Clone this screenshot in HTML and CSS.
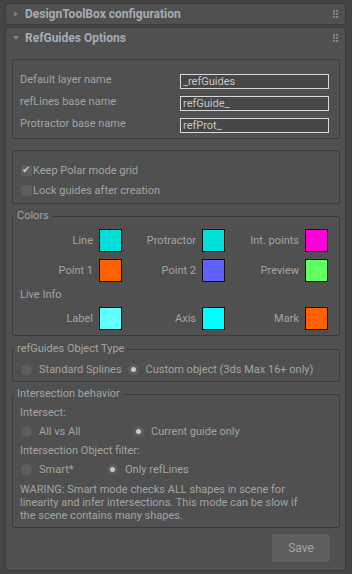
FILE: index.html
```html
<!DOCTYPE html>
<html lang="en">
<head>
  <meta charset="UTF-8">
  <title>RefGuides Options</title>
  <link rel="stylesheet" href="styles.css">
</head>
<body>

  <div class="rollout closed">
    <div class="head">
      <span class="arrow"></span>
      <span class="title">DesignToolBox configuration</span>
      <span class="grip"><i></i><i></i><i></i><i></i><i></i><i></i></span>
    </div>
  </div>

  <div class="rollout open">
    <div class="head">
      <span class="arrow"></span>
      <span class="title">RefGuides Options</span>
      <span class="grip"><i></i><i></i><i></i><i></i><i></i><i></i></span>
    </div>

    <div class="body">
      <div class="group names">
        <div class="row"><span>Default layer name</span><input type="text" value="_refGuides"></div>
        <div class="row"><span>refLines base name</span><input type="text" value="refGuide_"></div>
        <div class="row"><span>Protractor base name</span><input type="text" value="refProt_"></div>
      </div>

      <div class="group checks">
        <label class="check"><span class="box on"></span>Keep Polar mode grid</label>
        <label class="check"><span class="box"></span>Lock guides after creation</label>
      </div>

      <fieldset class="group colors">
        <legend>Colors</legend>
        <div class="swatches first">
          <div class="sw"><span>Line</span><b style="background:#00e0d8"></b></div>
          <div class="sw"><span>Protractor</span><b style="background:#00e0d8"></b></div>
          <div class="sw"><span>Int. points</span><b style="background:#ff00d8"></b></div>
          <div class="sw"><span>Point 1</span><b style="background:#ff6000"></b></div>
          <div class="sw"><span>Point 2</span><b style="background:#6060ff"></b></div>
          <div class="sw"><span>Preview</span><b style="background:#60ff60"></b></div>
        </div>
        <div class="sub live">Live Info</div>
        <div class="swatches">
          <div class="sw"><span>Label</span><b style="background:#60ffff"></b></div>
          <div class="sw"><span>Axis</span><b style="background:#00ffff"></b></div>
          <div class="sw"><span>Mark</span><b style="background:#ff6000"></b></div>
        </div>
      </fieldset>

      <fieldset class="group objtype">
        <legend>refGuides Object Type</legend>
        <div class="radios">
          <label class="radio"><span class="dot"></span>Standard Splines</label>
          <label class="radio"><span class="dot on"></span>Custom object (3ds Max 16+ only)</label>
        </div>
      </fieldset>

      <fieldset class="group inter">
        <legend>Intersection behavior</legend>
        <div class="sub">Intersect:</div>
        <div class="radios">
          <label class="radio w1"><span class="dot"></span>All vs All</label>
          <label class="radio"><span class="dot on"></span>Current guide only</label>
        </div>
        <div class="sub">Intersection Object filter:</div>
        <div class="radios">
          <label class="radio w2"><span class="dot"></span>Smart*</label>
          <label class="radio"><span class="dot on"></span>Only refLines</label>
        </div>
        <p class="warn">WARING: Smart mode checks ALL shapes in scene for<br>linearity and infer intersections. This mode can be slow if<br>the scene contains many shapes.</p>
      </fieldset>

      <div class="actions">
        <button>Save</button>
      </div>
    </div>
  </div>

</body>
</html>
```

FILE: styles.css
```css
body { margin: 0; padding: 3px 6px 0 5px; background: #444; font-family: Roboto, "Open Sans", sans-serif; font-size: 11px; color: #a3a3a3; }
.rollout { background: #505050; border: 1px solid #3b3b3b; border-radius: 3px; margin-bottom: 2px; }
.head { height: 20px; display: flex; align-items: center; padding: 0 7px 0 7px; }
.arrow { width: 12px; height: 6px; position: relative; }
.closed .arrow::before { content: ""; position: absolute; left: 1px; top: 0; border-left: 4px solid #7c7c7c; border-top: 3px solid transparent; border-bottom: 3px solid transparent; }
.open .arrow::before { content: ""; position: absolute; left: 0; top: 1px; border-top: 4px solid #7c7c7c; border-left: 3px solid transparent; border-right: 3px solid transparent; }
.title { flex: 1; font-weight: bold; font-size: 12px; color: #a4acb5; }
.grip { display: grid; grid-template-columns: repeat(2, 2px); gap: 1px 1px; }
.grip i { width: 2px; height: 2px; background: #858585; }
.body { padding: 11px 5px 8px 6px; }

.group { border: 1px solid #3a3a3a; border-radius: 2px; margin: 0; padding: 0; min-width: 0; }
legend { padding: 0 3px; margin-left: 1px; color: #a3a3a3; line-height: 12px; }

.names { padding: 10px 10px 2px 7px; margin-bottom: 11px; }
.names .row { display: flex; justify-content: space-between; align-items: center; height: 22px; }
.names .row span { margin-bottom: 3px; }
.names input { width: 149px; height: 15px; box-sizing: border-box; border: 1px solid #d8d8d8; background: #474747; color: #c6c6c6; font-family: inherit; font-size: 11px; padding: 0 0 0 2px; outline: none; }

.checks { padding: 9px 8px 3px 8px; margin-bottom: 6px; }
.check { display: flex; align-items: center; height: 20px; }
.box { width: 11px; height: 11px; background: #5d5d5d; margin-right: 1px; position: relative; }
.box.on::after { content: "\2714"; position: absolute; left: 1px; top: -2px; font-size: 10px; line-height: 14px; color: #c8c8c8; }

.colors { padding: 0 0 5px 0; margin-bottom: 7px; }
.swatches { display: grid; grid-template-columns: 109px 103px 103px; row-gap: 7px; }
.swatches.first { margin-top: 7px; }
.sw { display: flex; justify-content: flex-end; align-items: center; gap: 6px; }
.sw b { width: 21px; height: 21px; border: 1px solid #111; }
.sub { padding-left: 7px; height: 19px; line-height: 19px; }
.sub.live { height: 25px; line-height: 25px; }

.radios { display: flex; align-items: center; height: 19px; padding-left: 8px; }
.radio { display: flex; align-items: center; margin-right: 6px; }
.dot { width: 11px; height: 11px; border-radius: 50%; background: #5d5d5d; margin-right: 7px; position: relative; }
.dot.on::after { content: ""; position: absolute; left: 3px; top: 3px; width: 5px; height: 5px; border-radius: 50%; background: #c8c8c8; }
.objtype { padding: 4px 0 2px 0; margin-bottom: 6px; }
.objtype .radios { height: 20px; }
.w1 { width: 112px; margin-right: 0; }
.w2 { width: 86px; margin-right: 0; }
.inter { padding: 3px 0 5px 0; }
.warn { margin: 4px 0 0 7px; line-height: 13px; }

.actions { display: flex; justify-content: flex-end; padding-right: 10px; margin-top: 6px; }
button { width: 58px; height: 28px; border: none; border-radius: 3px; background: #5e5e5e; color: #a3a3a3; font-family: inherit; font-size: 12px; }
```
